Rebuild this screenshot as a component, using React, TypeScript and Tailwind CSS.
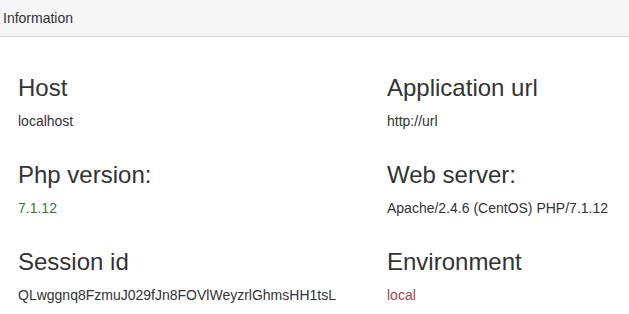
export default function App() {
  const items = [
    { label: "Host", value: "localhost", color: "text-[#333333]" },
    { label: "Application url", value: "http://url", color: "text-[#333333]" },
    { label: "Php version:", value: "7.1.12", color: "text-[#3c763d]" },
    { label: "Web server:", value: "Apache/2.4.6 (CentOS) PHP/7.1.12", color: "text-[#333333]" },
    { label: "Session id", value: "QLwggnq8FzmuJ029fJn8FOVlWeyzrlGhmsHH1tsL", color: "text-[#333333]" },
    { label: "Environment", value: "local", color: "text-[#a94442]" },
  ]

  return (
    <div className="w-[629px] h-[314px] bg-white overflow-hidden text-[#333333] font-['Liberation_Sans',Arial,sans-serif]">
      {/* Panel heading */}
      <div className="h-[37px] bg-[#f5f5f5] border-b border-[#dddddd] pl-[3px] py-2 text-[14px] leading-5">
        Information
      </div>

      {/* Panel body */}
      <div className="pl-[18px] pt-[17px] grid grid-cols-[369px_1fr]">
        {items.map((item) => (
          <div key={item.label}>
            <h3 className="mt-5 mb-2.5 text-[24px] leading-[27px] font-normal">{item.label}</h3>
            <p className={`mb-2.5 text-[14px] leading-5 ${item.color}`}>{item.value}</p>
          </div>
        ))}
      </div>
    </div>
  )
}
